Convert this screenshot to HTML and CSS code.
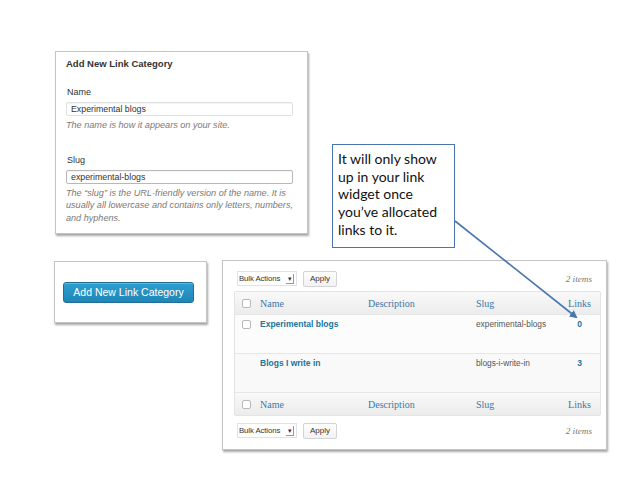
FILE: index.html
```html
<!DOCTYPE html>
<html>
<head>
<meta charset="utf-8">
<link rel="stylesheet" href="styles.css">
</head>
<body>
<div class="slide">
  <div class="panel form-panel">
    <h3 class="form-title">Add New Link Category</h3>
    <div class="field">
      <label class="label">Name</label>
      <div class="input">Experimental blogs</div>
      <p class="hint">The name is how it appears on your site.</p>
    </div>
    <div class="field field-slug">
      <label class="label">Slug</label>
      <div class="input input-focus">experimental-blogs</div>
      <p class="hint">The “slug” is the URL-friendly version of the name. It is usually all lowercase and contains only letters, numbers, and hyphens.</p>
    </div>
  </div>

  <div class="callout">It will only show up in your link widget once you’ve allocated links to it.</div>

  <div class="panel btn-panel">
    <div class="primary-btn">Add New Link Category</div>
  </div>

  <div class="panel table-panel">
    <div class="tablenav">
      <div class="select">Bulk Actions <span class="sel-arrow">▾</span></div>
      <div class="btn">Apply</div>
      <span class="count">2 items</span>
    </div>
    <div class="table">
      <div class="row head">
        <span class="cb"></span><span>Name</span><span>Description</span><span>Slug</span><span class="num">Links</span>
      </div>
      <div class="row item alt">
        <span class="cb"></span><span class="name">Experimental blogs</span><span></span><span class="slug">experimental-blogs</span><span class="num count-link">0</span>
      </div>
      <div class="row item">
        <span class="cb cb-none"></span><span class="name">Blogs I write in</span><span></span><span class="slug">blogs-i-write-in</span><span class="num count-link">3</span>
      </div>
      <div class="row head foot">
        <span class="cb"></span><span>Name</span><span>Description</span><span>Slug</span><span class="num">Links</span>
      </div>
    </div>
    <div class="tablenav tablenav-bottom">
      <div class="select">Bulk Actions <span class="sel-arrow">▾</span></div>
      <div class="btn">Apply</div>
      <span class="count">2 items</span>
    </div>
  </div>

  <svg class="arrow" width="638" height="479" viewBox="0 0 638 479">
    <defs>
      <marker id="head" markerWidth="8" markerHeight="8" refX="6" refY="4" orient="auto" markerUnits="userSpaceOnUse">
        <path d="M0,0 L8,4 L0,8 Z" fill="#4a76ad"/>
      </marker>
    </defs>
    <line x1="455" y1="221" x2="576" y2="317" stroke="#4a76ad" stroke-width="1.6" marker-end="url(#head)"/>
  </svg>
</div>
</body>
</html>
```

FILE: styles.css
```css
html, body {
  margin: 0;
  padding: 0;
  background: #ffffff;
}
.slide {
  position: relative;
  width: 638px;
  height: 479px;
  overflow: hidden;
  background: #fff;
  font-family: "Liberation Sans", Arial, sans-serif;
}
.panel {
  position: absolute;
  box-sizing: border-box;
  background: #fff;
  border: 1px solid #c4c4c4;
  box-shadow: 1px 2px 2px rgba(0,0,0,0.35);
}

/* form panel */
.form-panel {
  left: 55px;
  top: 51px;
  width: 253px;
  height: 183px;
  padding: 5px 4px 0 10px;
}
.form-title {
  margin: 0;
  font-size: 9.5px;
  font-weight: bold;
  color: #333;
  line-height: 13px;
}
.field { margin-top: 16px; }
.field-slug { margin-top: 22px; }
.label {
  display: block;
  font-size: 9px;
  color: #333;
  line-height: 12px;
  margin-left: 1px;
}
.input {
  margin-top: 4px;
  width: 227px;
  box-sizing: border-box;
  height: 14px;
  border: 1px solid #e0e0e0;
  border-radius: 2px;
  font-size: 8.8px;
  line-height: 12px;
  padding-left: 4px;
  color: #333;
  box-shadow: inset 0 1px 1px rgba(0,0,0,0.05);
}
.input-focus { border-color: #b8b8b8; }
.hint {
  margin: 3px 0 0 0;
  font-size: 9.1px;
  font-style: italic;
  color: #7a7a7a;
  line-height: 12.5px;
}

/* callout */
.callout {
  position: absolute;
  left: 332px;
  top: 144px;
  width: 123px;
  height: 104px;
  box-sizing: border-box;
  border: 1.5px solid #4a76ad;
  background: #fff;
  padding: 5px 2px 0 5px;
  font-family: "Lato", "Open Sans", sans-serif;
  font-size: 14px;
  line-height: 17.7px;
  color: #111;
}

/* button panel */
.btn-panel {
  left: 54px;
  top: 261px;
  width: 153px;
  height: 62px;
  padding: 20px 0 0 8px;
}
.primary-btn {
  width: 131px;
  height: 21px;
  box-sizing: border-box;
  border: 1px solid #1f6f96;
  border-radius: 3px;
  background: linear-gradient(#2e9fd0, #1f86b6);
  color: #fff;
  font-size: 10.5px;
  line-height: 19px;
  text-align: center;
  box-shadow: inset 0 1px 0 rgba(255,255,255,0.25);
}

/* table panel */
.table-panel {
  left: 222px;
  top: 260px;
  width: 385px;
  height: 190px;
  padding: 9px 9px 0 11px;
}
.tablenav {
  display: flex;
  align-items: center;
  gap: 6px;
  height: 17px;
  padding-left: 3px;
}
.tablenav-bottom { margin-top: 6px; }
.select {
  box-sizing: border-box;
  height: 15px;
  width: 60px;
  border: 1px solid #e2e2e2;
  background: #fff;
  font-size: 7.8px;
  line-height: 13px;
  padding-left: 1px;
  color: #333;
  display: flex;
  align-items: center;
  justify-content: space-between;
  white-space: nowrap;
  letter-spacing: -0.1px;
}
.sel-arrow {
  display: inline-block;
  width: 7px;
  height: 9px;
  margin-right: 2px;
  font-size: 7px;
  line-height: 9px;
  text-align: center;
  border-right: 1px solid #999;
  border-bottom: 1px solid #999;
  color: #333;
}
.btn {
  box-sizing: border-box;
  height: 16px;
  width: 34px;
  border: 1px solid #d4d4d4;
  border-radius: 2px;
  background: linear-gradient(#fefefe, #f2f2f2);
  font-size: 8px;
  line-height: 14px;
  text-align: center;
  color: #333;
}
.count {
  margin-left: auto;
  margin-right: 5px;
  font-family: "Liberation Serif", Georgia, serif;
  font-style: italic;
  font-size: 9.2px;
  color: #777;
}
.table {
  margin-top: 4px;
  width: 365px;
  border: 1px solid #e4e4e4;
  border-radius: 2px;
  background: #f9f9f9;
}
.row {
  display: grid;
  grid-template-columns: 25px 108px 108px 83px 41px;
  align-items: start;
  border-top: 1px solid #e6e6e6;
}
.row:first-child { border-top: 0; }
.head {
  height: 22px;
  align-items: center;
  background: linear-gradient(#f9f9f9, #ececec);
  font-family: "Liberation Serif", Georgia, serif;
  font-size: 10px;
  color: #3b78a6;
}
.item {
  height: 39px;
  padding-top: 3px;
  box-sizing: border-box;
  font-size: 8.5px;
  line-height: 12px;
}
.alt { background: #fcfcfc; }
.cb {
  display: block;
  width: 7px;
  height: 7px;
  margin-left: 7px;
  border: 1px solid #b8b8b8;
  border-radius: 2px;
  background: #fff;
}
.item .cb { margin-top: 2px; }
.cb-none { visibility: hidden; }
.name {
  font-weight: bold;
  color: #21759b;
}
.slug { color: #555; font-size: 8.3px; }
.num { text-align: center; }
.count-link { color: #21759b; font-weight: bold; }

.arrow {
  position: absolute;
  left: 0;
  top: 0;
  pointer-events: none;
}
```
